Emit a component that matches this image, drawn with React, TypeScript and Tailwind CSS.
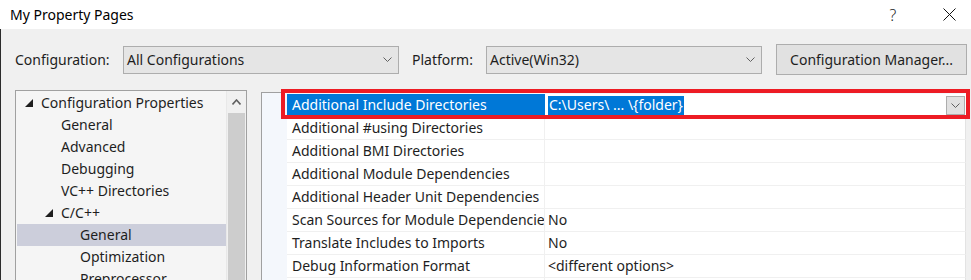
import { ReactNode } from 'react';

const treeItems: { label: string; level: number; expanded?: boolean; selected?: boolean }[] = [
  { label: 'Configuration Properties', level: 0, expanded: true },
  { label: 'General', level: 1 },
  { label: 'Advanced', level: 1 },
  { label: 'Debugging', level: 1 },
  { label: 'VC++ Directories', level: 1 },
  { label: 'C/C++', level: 1, expanded: true },
  { label: 'General', level: 2, selected: true },
  { label: 'Optimization', level: 2 },
  { label: 'Preprocessor', level: 2 },
];

const props: { name: string; value: string }[] = [
  { name: 'Additional #using Directories', value: '' },
  { name: 'Additional BMI Directories', value: '' },
  { name: 'Additional Module Dependencies', value: '' },
  { name: 'Additional Header Unit Dependencies', value: '' },
  { name: 'Scan Sources for Module Dependencies', value: 'No' },
  { name: 'Translate Includes to Imports', value: 'No' },
  { name: 'Debug Information Format', value: '<different options>' },
  { name: 'Support Just My Code Debugging', value: '' },
];

function Chevron({ className = '' }: { className?: string }) {
  return (
    <svg width="9" height="5" viewBox="0 0 9 5" className={className}>
      <polyline points="0.5,0.5 4.5,4.5 8.5,0.5" fill="none" stroke="#606060" strokeWidth="1" />
    </svg>
  );
}

function Expander() {
  return (
    <svg width="8" height="8" viewBox="0 0 8 8" className="shrink-0">
      <polygon points="0,8 8,8 8,0" fill="#1e1e1e" />
    </svg>
  );
}

function Combo({ children }: { children: ReactNode }) {
  return (
    <div className="w-[276px] h-[28px] bg-[#e5e5e5] border border-[#adadad] flex items-center pl-[3px] pr-[6px]">
      <span className="flex-1 whitespace-nowrap">{children}</span>
      <Chevron />
    </div>
  );
}

export default function App() {
  return (
    <div className="w-[971px] h-[280px] overflow-hidden bg-[#f0f0f0] relative font-['Noto_Sans',sans-serif] text-[14px] text-[#1e1e1e] leading-none">
      {/* title bar */}
      <div className="h-[29px] bg-white flex items-center pl-[10px]">
        <span className="flex-1 text-black">My Property Pages</span>
        <span className="w-[12px] text-center mr-[44px] text-[16px] font-light">?</span>
        <svg width="13" height="13" viewBox="0 0 13 13" className="mr-[15px]">
          <line x1="0.5" y1="0.5" x2="12.5" y2="12.5" stroke="#111" strokeWidth="1" />
          <line x1="12.5" y1="0.5" x2="0.5" y2="12.5" stroke="#111" strokeWidth="1" />
        </svg>
      </div>

      <div className="border-l border-[#2b2b2b] h-[251px] flex flex-col">
        {/* config row */}
        <div className="h-[61px] flex items-center pl-[14px]">
          <span className="w-[108px]">Configuration:</span>
          <Combo>All Configurations</Combo>
          <span className="ml-[13px] w-[74px]">Platform:</span>
          <Combo>Active(Win32)</Combo>
          <button className="ml-[14px] w-[191px] h-[31px] bg-[#e1e1e1] border border-[#adadad] text-[#1e1e1e]">
            Configuration Manager...
          </button>
        </div>

        <div className="flex flex-1 min-h-0">
          {/* tree */}
          <div className="ml-[14px] w-[232px] border border-[#a0a0a0] border-b-0 bg-[#f5f5f5] flex">
            <div className="flex-1 pt-px pl-px">
              {treeItems.map((it, i) => (
                <div
                  key={i}
                  className={`h-[22px] flex items-center ${it.selected ? 'bg-[#cccedb]' : ''}`}
                >
                  <div
                    className={`flex items-center ${
                      it.level === 0 ? 'pl-[8px]' : it.level === 1 ? 'pl-[28px]' : 'pl-[47px]'
                    }`}
                  >
                    {it.expanded ? (
                      <span className="w-[16px] flex items-center">
                        <Expander />
                      </span>
                    ) : (
                      <span className="w-[16px]" />
                    )}
                    <span className="whitespace-nowrap">{it.label}</span>
                  </div>
                </div>
              ))}
            </div>
            <div className="w-[20px] bg-[#f0f0f0] border-l border-[#e8e8e8] flex flex-col">
              <div className="h-[22px] flex items-center justify-center">
                <svg width="9" height="6" viewBox="0 0 9 6">
                  <polyline points="0.5,5.5 4.5,1 8.5,5.5" fill="none" stroke="#606060" strokeWidth="1.6" />
                </svg>
              </div>
              <div className="flex-1 mx-px bg-[#cdcdcd]" />
            </div>
          </div>

          {/* property grid */}
          <div className="ml-[14px] mt-[2px] w-[705px] border-l border-t border-[#a0a0a0] bg-[#f4f7fc] flex">
            <div className="w-[25px] shrink-0" />
            <div className="flex-1 pt-px">
              <div className="h-[23px] flex border-b border-[#f0f0f0] bg-white">
                <div className="w-[258px] bg-[#0078d7] text-white flex items-center pl-[5px] whitespace-nowrap">
                  Additional Include Directories
                </div>
                <div className="flex-1 flex items-center pl-[3px] pr-[1px]">
                  <span className="bg-[#0078d7] text-white h-[19px] flex items-center px-px whitespace-nowrap">
                    C:\Users\ ... \{'{'}folder{'}'}
                  </span>
                  <span className="flex-1" />
                  <div className="w-[19px] h-[19px] bg-[#e1e1e1] border border-[#adadad] flex items-center justify-center">
                    <Chevron />
                  </div>
                </div>
              </div>
              {props.map((p) => (
                <div key={p.name} className="h-[23px] flex border-b border-[#f0f0f0] bg-white border-r border-r-[#e3e3e3]">
                  <div className="w-[258px] flex items-center pl-[5px] whitespace-nowrap overflow-hidden border-r border-[#f0f0f0]">
                    {p.name}
                  </div>
                  <div className="flex-1 flex items-center pl-[3px] whitespace-nowrap">{p.value}</div>
                </div>
              ))}
            </div>
          </div>
        </div>
      </div>

      {/* red highlight overlay */}
      <div className="absolute left-[281px] top-[89px] w-[689px] h-[30px] border-[4px] border-[#ed1c24] pointer-events-none" />
    </div>
  );
}
